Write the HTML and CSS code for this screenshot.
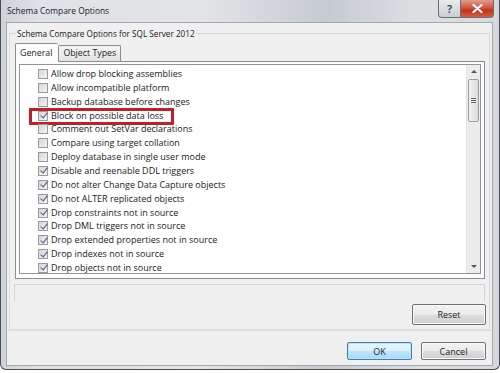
FILE: index.html
```html
<!DOCTYPE html>
<html>
<head>
<meta charset="utf-8">
<link rel="stylesheet" href="styles.css">
</head>
<body>
<div class="window">
  <div class="titlebar">
    <span class="title">Schema Compare Options</span>
    <div class="caption-btns">
      <div class="cbtn help">?</div>
      <div class="cbtn close">
        <svg width="11" height="9" viewBox="0 0 11 9"><path d="M1.5 1 L9.5 8 M9.5 1 L1.5 8" stroke="#fff" stroke-width="2.2" stroke-linecap="round"/></svg>
      </div>
    </div>
  </div>
  <div class="client">
    <fieldset class="group">
      <legend>Schema Compare Options for SQL Server 2012</legend>
      <div class="tabs">
        <div class="tab active">General</div>
        <div class="tab">Object Types</div>
      </div>
      <div class="tabpanel">
        <div class="listbox">
          <div class="items">
            <div class="row"><span class="cb"></span>Allow drop blocking assemblies</div>
            <div class="row"><span class="cb"></span>Allow incompatible platform</div>
            <div class="row"><span class="cb"></span>Backup database before changes</div>
            <div class="row"><span class="cb on"></span>Block on possible data loss<span class="highlight"></span></div>
            <div class="row"><span class="cb"></span>Comment out SetVar declarations</div>
            <div class="row"><span class="cb"></span>Compare using target collation</div>
            <div class="row"><span class="cb"></span>Deploy database in single user mode</div>
            <div class="row"><span class="cb on"></span>Disable and reenable DDL triggers</div>
            <div class="row"><span class="cb on"></span>Do not alter Change Data Capture objects</div>
            <div class="row"><span class="cb on"></span>Do not ALTER replicated objects</div>
            <div class="row"><span class="cb on"></span>Drop constraints not in source</div>
            <div class="row"><span class="cb on"></span>Drop DML triggers not in source</div>
            <div class="row"><span class="cb on"></span>Drop extended properties not in source</div>
            <div class="row"><span class="cb on"></span>Drop indexes not in source</div>
            <div class="row"><span class="cb on"></span>Drop objects not in source</div>
          </div>
          <div class="scrollbar">
            <div class="arrow up"></div>
            <div class="thumb"><span class="grip"></span></div>
            <div class="track"></div>
            <div class="arrow down"></div>
          </div>
        </div>
      </div>
      <div class="desc"></div>
      <div class="reset-row"><button class="btn">Reset</button></div>
    </fieldset>
    <div class="footer">
      <button class="btn ok">OK</button>
      <button class="btn">Cancel</button>
    </div>
  </div>
</div>
</body>
</html>
```
FILE: styles.css
```css
html, body {
  margin: 0;
  padding: 0;
  background: #ffffff;
}
body {
  font-family: "Open Sans", "Noto Sans", sans-serif;
  font-size: 9px;
  color: #1e1e1e;
}
.window {
  width: 500px;
  height: 370px;
  box-sizing: border-box;
  border: 1px solid #4a4f55;
  border-top: none;
  border-radius: 0 0 6px 6px;
  background: linear-gradient(90deg, #cfd3d8 0%, #dfe2e6 8%, #e3e5e8 40%, #c6cbd1 65%, #dde0e3 85%, #d6d9dc 100%);
  padding: 0 6px 3px 5px;
  display: flex;
  flex-direction: column;
}
.titlebar {
  height: 22px;
  display: flex;
  justify-content: space-between;
  align-items: flex-start;
  flex: none;
}
.title {
  font-size: 8.4px;
  padding: 5px 0 0 1px;
  color: #1a1a1a;
}
.caption-btns {
  display: flex;
  margin-right: -1px;
}
.cbtn {
  height: 18px;
  box-sizing: border-box;
  border: 1px solid #6b7077;
  border-top: none;
  display: flex;
  align-items: center;
  justify-content: center;
}
.help {
  width: 22px;
  border-radius: 0 0 0 4px;
  border-right: none;
  background: linear-gradient(#e9ecef, #c9cdd2);
  color: #4d5258;
  font-size: 11px;
  font-weight: bold;
}
.close {
  width: 34px;
  border-radius: 0 0 4px 0;
  background: linear-gradient(#e39b8e 0%, #d2563f 45%, #c2321c 60%, #d4603f 100%);
}
.client {
  flex: 1;
  background: #f0f0f0;
  border: 1px solid #a5a9ae;
  display: flex;
  flex-direction: column;
  padding: 0 2px 0 2px;
}
.group {
  margin: 2px 0 0 0;
  padding: 0 4px 4px 5px;
  border: 1px solid #dcdcdc;
  border-top-color: #d8d8d8;
  display: flex;
  flex-direction: column;
  min-width: 0;
}
.group legend {
  padding: 0 1px;
  margin-left: 1px;
  font-size: 8.2px;
  color: #1a1a1a;
  line-height: 17px;
}
.tabs {
  display: flex;
  align-items: flex-end;
  height: 19px;
  margin-top: 0;
  margin-left: 0;
  position: relative;
  z-index: 1;
}
.tab {
  border: 1px solid #898c95;
  border-bottom: none;
  font-size: 8.8px;
  padding: 0 4px;
  height: 15px;
  line-height: 14px;
  background: linear-gradient(#f4f4f4, #e4e4e4);
  border-radius: 2px 2px 0 0;
}
.tab.active {
  height: 18px;
  line-height: 18px;
  background: #fcfcfc;
  padding: 0 6px 0 4px;
  margin-bottom: -1px;
  border-right: none;
}
.tab + .tab {
  border-left: 1px solid #898c95;
}
.tabpanel {
  height: 218px;
  box-sizing: border-box;
  border: 1px solid #898c95;
  background: #fcfcfc;
  padding: 2px 3px 4px 3px;
}
.listbox {
  height: 100%;
  box-sizing: border-box;
  border: 1px solid #8e949b;
  background: #ffffff;
  display: flex;
}
.items {
  flex: 1;
  padding-top: 2px;
  overflow: hidden;
}
.row {
  position: relative;
  height: 13.86px;
  line-height: 13.86px;
  display: flex;
  align-items: center;
  padding-left: 18px;
  white-space: nowrap;
  color: #1a1a1a;
}
.cb {
  width: 10px;
  height: 10px;
  box-sizing: border-box;
  border: 1px solid #9a9a9a;
  background: linear-gradient(135deg, #d6d6d6, #f4f4f4);
  margin-right: 3px;
  flex: none;
  position: relative;
}
.cb.on::after {
  content: "";
  position: absolute;
  left: 2.5px;
  top: -0.5px;
  width: 3px;
  height: 6px;
  border: solid #4c5f84;
  border-width: 0 1.6px 1.6px 0;
  transform: rotate(38deg);
}
.highlight {
  position: absolute;
  left: 9px;
  top: -1px;
  width: 145px;
  height: 17px;
  box-sizing: border-box;
  border: 3px solid #c31d26;
  border-radius: 1px;
}
.scrollbar {
  width: 13px;
  background: #ececec;
  border-left: 1px solid #e2e2e2;
  display: flex;
  flex-direction: column;
  align-items: center;
}
.arrow {
  height: 14px;
  width: 100%;
  position: relative;
}
.arrow::after {
  content: "";
  position: absolute;
  left: 4px;
  border-left: 3px solid transparent;
  border-right: 3px solid transparent;
}
.arrow.up::after {
  top: 5px;
  border-bottom: 3px solid #555;
}
.arrow.down::after {
  top: 6px;
  border-top: 3px solid #555;
}
.thumb {
  width: 11px;
  height: 43px;
  box-sizing: border-box;
  border: 1px solid #9a9da2;
  border-radius: 2px;
  background: linear-gradient(90deg, #f2f2f2, #dcdcdc);
  display: flex;
  align-items: center;
  justify-content: center;
}
.grip {
  width: 5px;
  height: 5px;
  background: repeating-linear-gradient(#666 0 1px, transparent 1px 2px);
}
.track { flex: 1; }
.desc {
  margin: 5px 0 0 -1px;
  height: 16px;
  border: 1px solid #d3d3d3;
  border-bottom: none;
}
.reset-row {
  display: flex;
  justify-content: flex-end;
  margin-top: 3px;
  margin-right: -1px;
}
.btn {
  font-family: "Open Sans", "Noto Sans", sans-serif;
  font-size: 9px;
  color: #1e1e1e;
  width: 74px;
  height: 21px;
  border: 1px solid #707070;
  border-radius: 2px;
  background: linear-gradient(#f2f2f2 0%, #ebebeb 50%, #dddddd 51%, #cfcfcf 100%);
  padding: 0;
  box-shadow: inset 0 0 0 1px #fafafa;
}
.footer {
  display: flex;
  justify-content: flex-end;
  gap: 9px;
  padding: 11px 4px 0 0;
  flex: 1;
  border-top: 1px solid #dfdfdf;
  margin: 0 -2px;
  padding-right: 6px;
}
.footer .btn {
  width: 65px;
  height: 18px;
}
.btn.ok {
  border-color: #3c7fb1;
  box-shadow: inset 0 0 0 1px #b8e3f5;
  background: linear-gradient(#eaf6fd 0%, #d9f0fc 50%, #bee6fd 51%, #a7d9f5 100%);
}
```
